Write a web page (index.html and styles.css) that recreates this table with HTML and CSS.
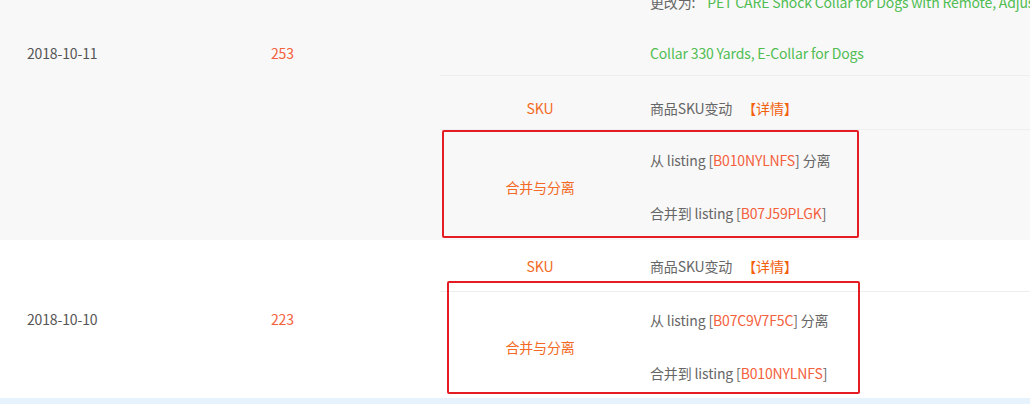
FILE: index.html
```html
<!DOCTYPE html>
<html lang="zh-CN">
<head>
    <meta charset="UTF-8">
    <meta name="viewport" content="width=device-width, initial-scale=1.0">
    <title>Listing 变动记录</title>
    <link rel="stylesheet" href="styles.css">
</head>
<body>
    <div class="table">
        <div class="row row-first row-gray">
            <div class="cell date">2018-10-11</div>
            <div class="cell num">253</div>
            <div class="sub">
                <div class="sub-row title-row">
                    <div class="type"></div>
                    <div class="content">
                        <p class="title-line"><span class="label">原标题为:</span><span class="old">PET CARE Shock Collar for Dogs with Remote, Rechargeable Training</span></p>
                        <p class="title-line"><span class="old">Collar 330 Yards, Waterproof E-Collar</span></p>
                        <p class="title-line"><span class="label">更改为:</span><span class="green">PET CARE Shock Collar for Dogs with Remote, Adjustable Training</span></p>
                        <p class="title-line"><span class="green">Collar 330 Yards, E-Collar for Dogs</span></p>
                    </div>
                </div>
                <div class="sub-row sku-row sku-first">
                    <div class="type">SKU</div>
                    <div class="content">商品SKU变动<a class="detail" href="#">【详情】</a></div>
                </div>
                <div class="sub-row merge-row merge-first">
                    <div class="type">合并与分离</div>
                    <div class="content lines">
                        <p>从 listing [<span class="asin">B010NYLNFS</span>] 分离</p>
                        <p>合并到 listing [<span class="asin">B07J59PLGK</span>]</p>
                    </div>
                    <div class="mark"></div>
                </div>
            </div>
        </div>

        <div class="row row-second">
            <div class="cell date">2018-10-10</div>
            <div class="cell num">223</div>
            <div class="sub">
                <div class="sub-row sku-row">
                    <div class="type">SKU</div>
                    <div class="content">商品SKU变动<a class="detail" href="#">【详情】</a></div>
                </div>
                <div class="sub-row merge-row">
                    <div class="type">合并与分离</div>
                    <div class="content lines">
                        <p>从 listing [<span class="asin">B07C9V7F5C</span>] 分离</p>
                        <p>合并到 listing [<span class="asin">B010NYLNFS</span>]</p>
                    </div>
                    <div class="mark"></div>
                </div>
            </div>
        </div>
        <div class="row-next"></div>
    </div>
</body>
</html>
```

FILE: styles.css
```css
body {
    margin: 0;
    padding: 0;
    background: #fff;
    font-family: "Noto Sans CJK SC", "Open Sans", sans-serif;
    font-size: 14px;
    letter-spacing: -0.15px;
    color: #666;
    overflow: hidden;
}
p {
    margin: 0;
}
.table {
    width: 1030px;
    overflow: hidden;
}
.row {
    display: flex;
    align-items: stretch;
}
.row-gray {
    background: #f8f8f8;
}
.row-first {
    margin-top: -134px;
}
.cell {
    display: flex;
    align-items: center;
    flex-shrink: 0;
}
.date {
    width: 217px;
    padding-left: 27px;
    color: #555;
}
.num {
    width: 169px;
    padding-left: 27px;
    color: #f4603c;
}
.sub {
    flex: 1;
    min-width: 0;
    display: flex;
    flex-direction: column;
}
.sub-row {
    position: relative;
    display: flex;
    align-items: center;
    border-bottom: 1px solid #eeeeee;
    box-sizing: border-box;
}
.sub-row:last-child {
    border-bottom: none;
}
.type {
    width: 200px;
    flex-shrink: 0;
    text-align: center;
    color: #f26a24;
}
.content {
    flex: 1;
    min-width: 0;
    padding-left: 10px;
    white-space: nowrap;
}
.title-row {
    height: 210px;
    align-items: flex-start;
    padding-top: 9px;
}
.title-row .content {
    overflow: hidden;
}
.title-line {
    line-height: 51px;
}
.label {
    margin-right: 12px;
}
.old {
    color: #999;
}
.green {
    color: #4fbd52;
}
.sku-row {
    height: 52px;
}
.sku-first {
    height: 54px;
    padding-top: 10px;
}
.detail {
    margin-left: 10px;
    color: #f2600c;
    text-decoration: none;
}
.merge-row {
    height: 106px;
    padding-top: 3px;
}
.merge-first {
    height: 110px;
    padding-top: 3px;
}
.lines {
    display: flex;
    flex-direction: column;
    gap: 33px;
}
.lines p {
    line-height: 20px;
}
.asin {
    color: #f4603c;
}
.mark {
    position: absolute;
    left: 7px;
    top: -11px;
    width: 409px;
    height: 109px;
    border: 2px solid #e51c23;
    border-radius: 2px;
}
.merge-first .mark {
    left: 2px;
    top: 0;
    width: 413px;
    height: 104px;
}
.row-next {
    height: 6px;
    background: #e6f2fc;
}
```
